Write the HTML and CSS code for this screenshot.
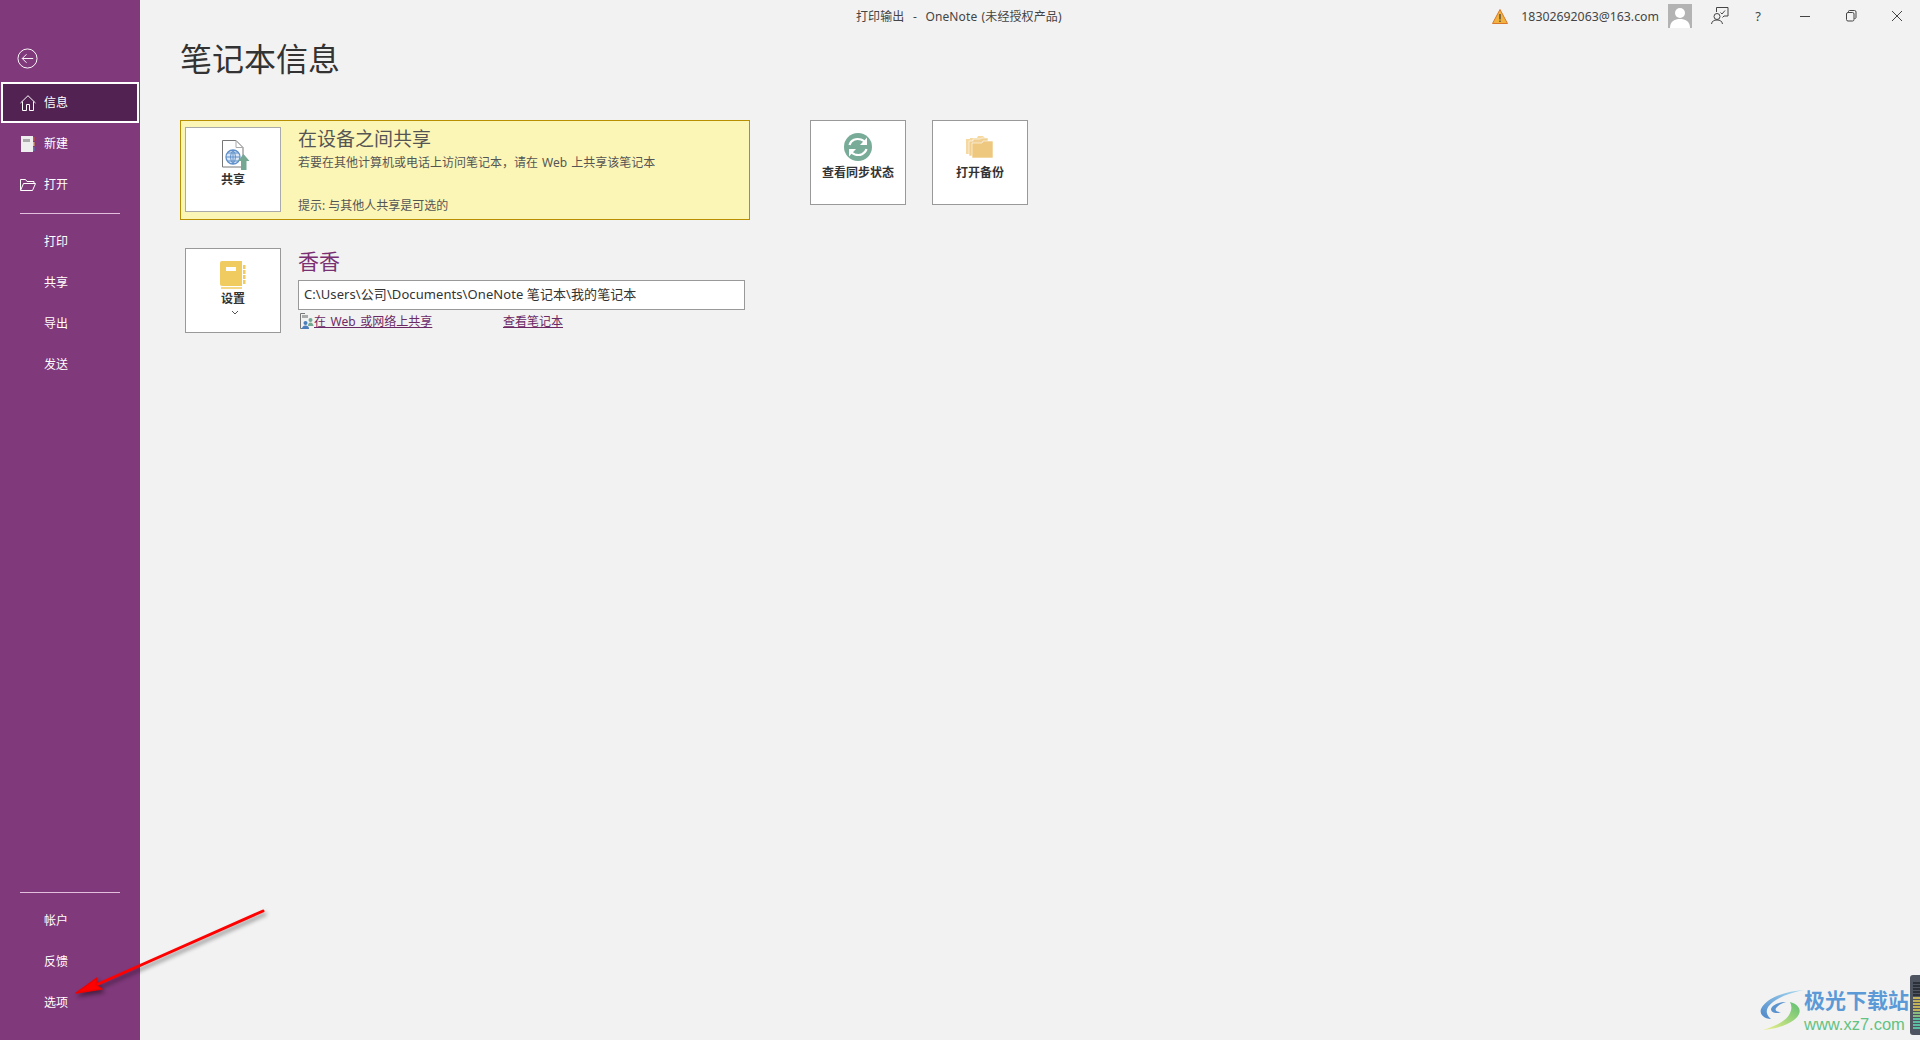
FILE: index.html
```html
<!DOCTYPE html>
<html lang="zh-CN">
<head>
  <meta charset="UTF-8" />
  <title>打印输出 - OneNote</title>
  <link rel="stylesheet" href="styles.css">
</head>
<body>
  <div class="sidebar">
    <div class="back">
      <svg width="21" height="21" viewBox="0 0 22 22" fill="none" stroke="#fff" stroke-width="1">
        <circle cx="11" cy="11" r="10"/>
        <path d="M5.500 11H17M10 6.500L5.500 11L10 15.500"/>
      </svg>
    </div>
    <div class="nav-item active">
      <svg class="nav-icon" width="16" height="16" viewBox="0 0 16 16" fill="none" stroke="#fff">
        <path d="M.5 8L8 .7L15.500 8M2.500 6.500V15.500H6.500V9.500H9.500V15.500H13.500V6.500"/>
      </svg>
      <span>信息</span>
    </div>
    <div class="nav-item">
      <svg class="nav-icon" width="16" height="16" viewBox="0 0 16 16">
        <rect x="1" y="0" width="12" height="16" fill="#eee"/>
        <rect x="3" y="3" width="7" height="3" fill="#aaa"/>
        <rect x="13" y="1" width="1.500" height="4" fill="#d5502d"/>
        <rect x="13" y="6" width="1.500" height="4" fill="#e8b64c"/>
        <rect x="13" y="11" width="1.500" height="4" fill="#4a7ebb"/>
      </svg>
      <span>新建</span>
    </div>
    <div class="nav-item">
      <svg class="nav-icon" width="16" height="16" viewBox="0 0 16 16" fill="none" stroke="#fff">
        <path d="M.5 13V2.500H5.500L7 4.500H14V6.500M.5 13.500H12.500L15.500 6.500H3.500L.5 13.500Z"/>
      </svg>
      <span>打开</span>
    </div>
    <div class="nav-divider"></div>
    <div class="nav-item"><span class="nav-text">打印</span></div>
    <div class="nav-item"><span class="nav-text">共享</span></div>
    <div class="nav-item"><span class="nav-text">导出</span></div>
    <div class="nav-item"><span class="nav-text">发送</span></div>

    <div class="nav-bottom">
      <div class="nav-divider"></div>
      <div class="nav-item"><span class="nav-text">帐户</span></div>
      <div class="nav-item"><span class="nav-text">反馈</span></div>
      <div class="nav-item"><span class="nav-text">选项</span></div>
    </div>
  </div>

  <div class="main">
    <div class="titlebar">
      <span class="window-title">打印输出&nbsp; - &nbsp;OneNote (未经授权产品)</span>
      <div class="window-tools">
        <svg class="warn" width="16" height="15" viewBox="0 0 16 15">
          <path d="M8 .5L15.500 14.500H.5Z" fill="#f2b23e" stroke="#d9782a"/>
          <path d="M8 5V10.500M8 11.500V13" stroke="#444" stroke-width="1.300"/>
        </svg>
        <span class="account">18302692063@163.com</span>
        <svg class="avatar" width="24" height="24" viewBox="0 0 24 24">
          <rect width="24" height="24" fill="#b3b3b3"/>
          <circle cx="12" cy="9" r="5" fill="#fff"/>
          <path d="M2 24C2 17 7 15 12 15S22 17 22 24Z" fill="#fff"/>
        </svg>
        <svg class="feedback" width="18" height="18" viewBox="0 0 18 18" fill="none" stroke="#444">
          <path d="M5.500 5V.5H17V9H13L11.500 10.500"/>
          <circle cx="6" cy="9.500" r="3"/>
          <path d="M.5 17C1 14 3 13 6 13S11 14 11.500 17M9.500 5.500L11 7L14 3.500"/>
        </svg>
        <span class="help">?</span>
        <svg class="win-btn" width="46" height="12" viewBox="0 0 46 12" fill="none" stroke="#444">
          <path d="M18 6.500H28"/>
        </svg>
        <svg class="win-btn" width="46" height="12" viewBox="0 0 46 12" fill="none" stroke="#444">
          <rect x="18.500" y="2.500" width="7.500" height="8.500" rx="1.500"/>
          <path d="M20.500 2.500V1.500Q20.500 .5 21.500 .5H26.500Q28 .5 28 2V7.500Q28 8.500 26.500 8.500"/>
        </svg>
        <svg class="win-btn" width="46" height="12" viewBox="0 0 46 12" fill="none" stroke="#444">
          <path d="M18 1L28 11M28 1L18 11"/>
        </svg>
      </div>
    </div>

    <div class="content">
      <h1 class="page-title">笔记本信息</h1>

      <div class="top-row">
        <div class="share-card">
          <div class="tile tile-share">
            <svg width="36" height="31" viewBox="0 0 36 31">
              <path d="M7.500 .5H21L28 7.500V27H7.500Z" fill="#fff" stroke="#777"/>
              <path d="M21 .5V7.500H28" fill="none" stroke="#aaa"/>
              <circle cx="18" cy="17" r="7" fill="#dbe7f5" stroke="#5f8fc9" stroke-width="1.300"/>
              <path d="M11 17H25M18 10V24M12.500 13H23.500M12.500 21H23.500M18 10Q13 17 18 24Q23 17 18 10" fill="none" stroke="#5f8fc9"/>
              <path d="M28.500 14L34.500 21H31.500V30H26V21H23Z" fill="#74a893"/>
            </svg>
            <span>共享</span>
          </div>
          <div class="share-text">
            <div class="share-title">在设备之间共享</div>
            <div class="share-desc">若要在其他计算机或电话上访问笔记本&#65292;请在 Web 上共享该笔记本</div>
            <div class="share-hint">提示: 与其他人共享是可选的</div>
          </div>
        </div>

        <div class="tile tile-action">
          <svg width="28" height="28" viewBox="0 0 28 28">
            <circle cx="14" cy="14" r="14" fill="#78ac99"/>
            <path d="M5.500 12C7 7 12 5 17 6.500Q19 7.200 20.500 8.800" fill="none" stroke="#fff" stroke-width="2.200"/>
            <path d="M23 4.500V12H16Z" fill="#fff"/>
            <path d="M22.500 16C21 21 16 23 11 21.500Q9 20.800 7.500 19.200" fill="none" stroke="#fff" stroke-width="2.200"/>
            <path d="M5 23.500V16H12Z" fill="#fff"/>
          </svg>
          <span>查看同步状态</span>
        </div>
        <div class="tile tile-action">
          <svg width="28" height="24" viewBox="0 0 28 24">
            <path d="M0 4H4V3H11L12 1H17L19 3V19H0Z" fill="#f5d9a0"/>
            <path d="M3 6H7V4H14L16 3H22V21H3Z" fill="#f0cf90" stroke="#fff" stroke-width=".6"/>
            <path d="M6 8H16L17 6H27V23H6Z" fill="#eec87e" stroke="#fff" stroke-width=".6"/>
          </svg>
          <span>打开备份</span>
        </div>
      </div>

      <div class="notebook-row">
        <div class="tile tile-share tile-settings">
          <svg width="26" height="29" viewBox="0 0 26 29">
            <path d="M2 0H22V25H2Q0 25 0 23V2Q0 0 2 0Z" fill="#f0cb5f"/>
            <path d="M1 27H22" stroke="#f0cb5f" stroke-width="1.500"/>
            <rect x="6" y="6" width="10" height="4" fill="#fff"/>
            <path d="M23 4H25.500V8H23ZM23 9H25.500V13H23ZM23 14H25.500V18H23ZM23 19H25.500V23H23Z" fill="#f0cb5f"/>
          </svg>
          <span>设置</span>
          <svg class="chevron" width="8" height="5" viewBox="0 0 8 5" fill="none" stroke="#555">
            <path d="M1 1L4 4L7 1"/>
          </svg>
        </div>
        <div class="notebook-info">
          <div class="notebook-name">香香</div>
          <div class="path-box">C:\Users\公司\Documents\OneNote 笔记本\我的笔记本</div>
          <div class="links">
            <svg class="link-icon" width="14" height="16" viewBox="0 0 14 16">
              <path d="M5 .5H.5V15.500H4" fill="none" stroke="#777"/>
              <rect x="2" y="2" width="6" height="3" fill="#aaa"/>
              <circle cx="5.500" cy="10" r="2" fill="#4a7ebb"/>
              <path d="M2 16Q2 12.500 5.500 12.500T9 16Z" fill="#4a7ebb"/>
              <circle cx="10.500" cy="7" r="2" fill="#74a893"/>
              <path d="M8 13Q8 9.500 10.500 9.500T13.500 13Z" fill="#74a893"/>
            </svg>
            <a class="link link-share">在 Web 或网络上共享</a>
            <a class="link">查看笔记本</a>
          </div>
        </div>
      </div>
    </div>
  </div>

  <svg class="arrow" width="220" height="110" viewBox="0 0 220 110">
    <path d="M203 7L36 81" fill="none" stroke="#f00" stroke-width="3" stroke-linecap="round"/>
    <path d="M16 89L37 74L36 81L42 85Z" fill="#f00" stroke="#e00" stroke-width="1.500" stroke-linejoin="round"/>
  </svg>

  <div class="watermark">
    <svg class="wm-logo" width="46" height="42" viewBox="0 0 46 42" fill="none">
      <defs>
        <linearGradient id="wm-blue" x1="0" y1="1" x2="1" y2="0">
          <stop offset="0" stop-color="#4d86c9"/>
          <stop offset="1" stop-color="#a8dcf2"/>
        </linearGradient>
        <linearGradient id="wm-green" x1="1" y1="0" x2="0" y2="1">
          <stop offset="0" stop-color="#5fbf73"/>
          <stop offset="1" stop-color="#eef08a"/>
        </linearGradient>
      </defs>
      <path d="M44 1C26 2 6 9 1 20C-1 26 5 30 11 30C5 25 5 19 13 13C21 7 33 3 44 1Z" fill="url(#wm-blue)"/>
      <path d="M26 13C19 13 12 16 11 20C11 24 17 25 21 23C16 23 14 21 17 18C19 16 22 14 26 13Z" fill="#5b93cf"/>
      <path d="M30 13C41 16 43 24 34 31C26 37 14 40 3 41C14 37 25 33 29 26C32 21 32 17 30 13Z" fill="url(#wm-green)"/>
    </svg>
    <div class="wm-text">
      <div class="wm-name">极光下载站</div>
      <div class="wm-url">www.xz7.com</div>
    </div>
  </div>

  <svg class="meter" width="10" height="60" viewBox="0 0 10 60">
    <rect x="0" y="0" width="14" height="60" rx="3" fill="#4e5460"/>
    <path d="M3 8H10M3 11H10M3 14H10M3 17H10M3 20H10" stroke="#22252b" stroke-width="1.500"/>
    <path d="M3 23H10M3 26H10M3 29H10M3 32H10M3 35H10" stroke="#e8cf55" stroke-width="1.500"/>
    <path d="M3 38H10M3 41H10" stroke="#9bdc8c" stroke-width="1.500"/>
    <path d="M3 44H10M3 47H10M3 50H10M3 53H10" stroke="#5fe0b8" stroke-width="1.500"/>
  </svg>
</body>
</html>
```

FILE: styles.css
```css
html, body {
  height: 100%;
}
body {
  margin: 0;
  display: flex;
  height: 1040px;
  overflow: hidden;
  position: relative;
  background-color: #f2f2f2;
  font-family: "Noto Sans", "Noto Sans CJK SC", sans-serif;
  font-size: 12px;
  color: #444;
}
.sidebar {
  width: 140px;
  flex-shrink: 0;
  background-color: #80397b;
  color: #fff;
  display: flex;
  flex-direction: column;
  padding-bottom: 17px;
  box-sizing: border-box;
}
.back {
  height: 82px;
  padding: 48px 0 0 17px;
  box-sizing: border-box;
}
.back svg {
  display: block;
}
.nav-item {
  height: 41px;
  display: flex;
  align-items: center;
  padding-left: 20px;
  box-sizing: border-box;
  flex-shrink: 0;
}
.nav-item span {
  margin-bottom: 2px;
}
.nav-item.active {
  margin: 0 1px;
  padding-left: 17px;
  background-color: #522352;
  border: 2px solid #fff;
}
.nav-icon {
  margin-right: 8px;
  flex-shrink: 0;
}
.nav-text {
  margin-left: 24px;
}
.nav-divider {
  height: 1px;
  margin: 8px 20px 7px;
  background-color: #e2bfdd;
}
.nav-bottom {
  margin-top: auto;
}
.main {
  flex: 1;
  display: flex;
  flex-direction: column;
}
.titlebar {
  height: 32px;
  display: flex;
  align-items: center;
  padding-left: 716px;
}
.window-title {
  color: #444;
  white-space: nowrap;
  word-spacing: 1px;
  letter-spacing: 0.120px;
}
.window-tools {
  margin-left: auto;
  display: flex;
  align-items: center;
}
.warn {
  margin-left: 3px;
}
.account {
  margin: 0 9px 0 13px;
  font-size: 12.300px;
  color: #444;
}
.feedback {
  margin-left: 19px;
}
.help {
  width: 20px;
  margin-left: 19px;
  text-align: center;
  font-size: 13px;
}
.help + .win-btn {
  margin-left: 14px;
}
.content {
  padding-left: 40px;
}
.page-title {
  margin: 0;
  height: 88px;
  padding-top: 7px;
  box-sizing: border-box;
  font-size: 32px;
  line-height: 40px;
  font-weight: 400;
  color: #333;
}
.top-row {
  display: flex;
  align-items: flex-start;
  gap: 26px;
}
.share-card {
  width: 570px;
  height: 100px;
  margin-right: 34px;
  box-sizing: border-box;
  display: flex;
  padding: 6px 4px;
  background-color: #fcf6b6;
  border: 1px solid #b88f00;
}
.tile {
  width: 96px;
  height: 85px;
  box-sizing: border-box;
  flex-shrink: 0;
  display: flex;
  flex-direction: column;
  align-items: center;
  background-color: #fff;
  border: 1px solid #999;
  font-weight: 700;
  color: #333;
}
.tile-share {
  padding-top: 12px;
  border-color: #aaa;
}
.tile-share span {
  margin-top: 1px;
  line-height: 16px;
}
.tile-action {
  padding-top: 12px;
}
.tile-action span {
  line-height: 16px;
  margin-top: 4px;
  height: 16px;
}
.tile-action svg {
  height: 28px;
}
.share-text {
  margin-left: 17px;
  flex: 1;
}
.share-title {
  margin-top: -1px;
  font-size: 19px;
  line-height: 26px;
  color: #555;
}
.share-desc {
  margin-top: 2px;
  line-height: 18px;
  color: #555;
  word-spacing: 1px;
}
.share-hint {
  margin-top: 25px;
  line-height: 18px;
  color: #555;
}
.notebook-row {
  display: flex;
  margin-top: 28px;
  padding-left: 5px;
}
.tile-settings {
  border-color: #999;
}
.chevron {
  margin: 3px 0 0 4px;
}
.notebook-info {
  margin-left: 17px;
  width: 447px;
}
.notebook-name {
  margin-top: -1px;
  height: 33px;
  font-size: 21px;
  line-height: 28px;
  color: #7a2f73;
}
.path-box {
  height: 30px;
  box-sizing: border-box;
  padding-left: 5px;
  background-color: #fff;
  border: 1px solid #999;
  font-size: 13px;
  line-height: 27px;
  color: #333;
  white-space: nowrap;
  letter-spacing: 0.080px;
}
.links {
  display: flex;
  align-items: center;
  height: 22px;
  padding-left: 2px;
}
.link-icon {
  flex-shrink: 0;
}
.link {
  color: #6b2a66;
  text-decoration: underline;
}
.link-share {
  width: 189px;
  word-spacing: 1.500px;
}
.arrow {
  position: absolute;
  left: 60px;
  top: 904px;
  filter: drop-shadow(2px 3px 2px rgba(0, 0, 0, 0.45));
}
.watermark {
  position: absolute;
  left: 1760px;
  top: 988px;
  display: flex;
  align-items: flex-start;
}
.wm-logo {
  margin-top: 1px;
}
.wm-text {
  margin-left: -2px;
  font-family: "Liberation Sans", "Noto Sans CJK SC", sans-serif;
  font-weight: 700;
}
.wm-name {
  font-size: 21px;
  line-height: 26px;
  color: #5b9ad6;
}
.wm-url {
  font-size: 16.500px;
  line-height: 20px;
  font-weight: 400;
  color: #62c283;
}
.meter {
  position: absolute;
  right: 0;
  top: 975px;
}
```
